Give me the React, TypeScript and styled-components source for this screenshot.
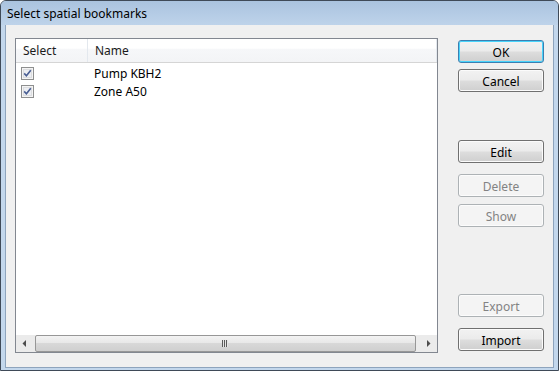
import React from "react";
import styled, { createGlobalStyle, css } from "styled-components";

const Global = createGlobalStyle`
  html, body { margin: 0; padding: 0; background: #ffffff; }
  body { font-family: "Noto Sans", "Liberation Sans", sans-serif; font-size: 12px; color: #000; }
  * { box-sizing: border-box; }
`;

const Window = styled.div`
  width: 559px;
  height: 371px;
  border: 1px solid #3f4a58;
  border-radius: 6px 6px 0 0;
  background: #c3d7ec;
  display: flex;
  flex-direction: column;
  overflow: hidden;
`;

const TitleBar = styled.div`
  height: 24px;
  flex: none;
  display: flex;
  align-items: center;
  padding-left: 6px;
  padding-top: 1px;
  background: linear-gradient(#aac3df, #bed3ea);
  color: #000;
  font-size: 12px;
`;

const Frame = styled.div`
  flex: 1;
  display: flex;
  padding: 0 4px 2px 4px;
  min-height: 0;
`;

const Body = styled.div`
  flex: 1;
  display: flex;
  gap: 20px;
  padding: 13px 9px 14px 9px;
  background: #f0f0f0;
  border: 1px solid #8ea4bd;
  border-top: none;
`;

const ListBox = styled.div`
  flex: 1;
  display: flex;
  flex-direction: column;
  border: 1px solid #828790;
  background: #ffffff;
`;

const Header = styled.div`
  height: 24px;
  flex: none;
  display: flex;
  background: linear-gradient(#ffffff 0%, #ffffff 40%, #f6f7f9 45%, #f3f4f6 100%);
  border-bottom: 1px solid #d5d5d5;
`;

const HeaderCell = styled.div<{ $w?: number }>`
  ${(p) => (p.$w ? css`width: ${p.$w}px; flex: none;` : css`flex: 1;`)}
  display: flex;
  align-items: center;
  padding-left: 7px;
  padding-bottom: 1px;
  color: #1b1b1b;
  border-right: 1px solid #e3e8ee;
`;

const Rows = styled.div`
  flex: 1;
  display: flex;
  flex-direction: column;
  padding-top: 1px;
`;

const Row = styled.div`
  height: 18px;
  display: flex;
  align-items: center;
`;

const CheckCell = styled.div`
  width: 71px;
  flex: none;
  display: flex;
  align-items: center;
  padding-left: 5px;
`;

const NameCell = styled.div`
  padding-left: 7px;
  color: #000;
`;

const HScroll = styled.div`
  height: 17px;
  flex: none;
  display: flex;
  align-items: stretch;
  background: #ebebeb;
`;

const ArrowBtn = styled.div`
  width: 17px;
  flex: none;
  display: flex;
  align-items: center;
  justify-content: center;
`;

const Track = styled.div`
  flex: 1;
  display: flex;
  padding: 0 4px 0 2px;
`;

const Thumb = styled.div`
  flex: 1;
  display: flex;
  align-items: center;
  justify-content: center;
  border: 1px solid #979797;
  border-radius: 2px;
  background: linear-gradient(#f3f3f3 0%, #e8e8e8 45%, #d8d8d8 50%, #cfcfcf 100%);
`;

const ButtonColumn = styled.div`
  width: 86px;
  flex: none;
  display: flex;
  flex-direction: column;
  padding-top: 2px;
`;

const Button = styled.button<{ $default?: boolean; $top?: number }>`
  height: 23px;
  width: 86px;
  margin-top: ${(p) => p.$top ?? 0}px;
  font-family: "Noto Sans", "Liberation Sans", sans-serif;
  font-size: 12px;
  color: #000;
  padding: 1px 0 0 0;
  border-radius: 3px;
  border: 1px solid #707070;
  background: linear-gradient(#f2f2f2 0%, #ebebeb 48%, #dddddd 52%, #cfcfcf 100%);
  box-shadow: inset 0 0 0 1px #fbfbfb;
  ${(p) =>
    p.$default &&
    css`
      border-color: #3c7fb1;
      box-shadow: inset 0 0 0 1px #48d4fb;
    `}
  &:disabled {
    color: #838383;
    border-color: #adb2b5;
    background: #f4f4f4;
    box-shadow: inset 0 0 0 1px #fcfcfc;
  }
`;

const CheckBox = () => (
  <svg width="13" height="13" viewBox="0 0 13 13">
    <rect x="0.5" y="0.5" width="12" height="12" fill="#f4f4f4" stroke="#8e8f8f" />
    <rect x="2" y="2" width="9" height="9" fill="#dcdde0" />
    <rect x="3" y="3" width="7" height="7" fill="#eceef2" />
    <path d="M3.2 6.4 L5.4 8.8 L9.8 3.2" fill="none" stroke="#4a5f94" strokeWidth="1.6" />
  </svg>
);

const LeftArrow = () => (
  <svg width="5" height="7" viewBox="0 0 5 7">
    <path d="M4 0 L4 7 L0.5 3.5 Z" fill="#4d4d4d" />
  </svg>
);

const RightArrow = () => (
  <svg width="5" height="7" viewBox="0 0 5 7">
    <path d="M1 0 L1 7 L4.5 3.5 Z" fill="#4d4d4d" />
  </svg>
);

const Grip = () => (
  <svg width="7" height="7" viewBox="0 0 7 7">
    <rect x="0" y="0" width="1" height="7" fill="#5a5a5a" />
    <rect x="2" y="0" width="1" height="7" fill="#5a5a5a" />
    <rect x="4" y="0" width="1" height="7" fill="#5a5a5a" />
    <rect x="1" y="0" width="1" height="7" fill="#e4e4e4" />
    <rect x="3" y="0" width="1" height="7" fill="#e4e4e4" />
    <rect x="5" y="0" width="1" height="7" fill="#e4e4e4" />
  </svg>
);

const items = ["Pump KBH2", "Zone A50"];

export default function App() {
  return (
    <>
      <Global />
      <Window>
        <TitleBar>Select spatial bookmarks</TitleBar>
        <Frame>
          <Body>
            <ListBox>
              <Header>
                <HeaderCell $w={72}>Select</HeaderCell>
                <HeaderCell>Name</HeaderCell>
              </Header>
              <Rows>
                {items.map((n) => (
                  <Row key={n}>
                    <CheckCell>
                      <CheckBox />
                    </CheckCell>
                    <NameCell>{n}</NameCell>
                  </Row>
                ))}
              </Rows>
              <HScroll>
                <ArrowBtn>
                  <LeftArrow />
                </ArrowBtn>
                <Track>
                  <Thumb>
                    <Grip />
                  </Thumb>
                </Track>
                <ArrowBtn>
                  <RightArrow />
                </ArrowBtn>
              </HScroll>
            </ListBox>
            <ButtonColumn>
              <Button $default>OK</Button>
              <Button $top={6}>Cancel</Button>
              <Button $top={48}>Edit</Button>
              <Button $top={11} disabled>Delete</Button>
              <Button $top={7} disabled>Show</Button>
              <Button $top={67} disabled>Export</Button>
              <Button $top={11}>Import</Button>
            </ButtonColumn>
          </Body>
        </Frame>
      </Window>
    </>
  );
}
